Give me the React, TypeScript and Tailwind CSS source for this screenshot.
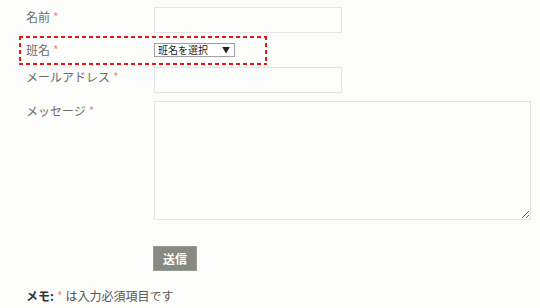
import React from "react";

const font = { fontFamily: '"Noto Sans CJK JP", "Noto Sans", sans-serif' };

function Star() {
  return <span className="ml-[3px] text-[#f28a8a]">*</span>;
}

export default function App() {
  return (
    <div
      className="w-[540px] min-h-[308px] bg-[#fcfcfa] pt-[7px] text-[12px] leading-[18px] text-[#6b6b6b]"
      style={font}
    >
      {/* 名前 */}
      <div className="flex pl-[26px]">
        <div className="w-[128px] pt-[1px]">
          名前
          <Star />
        </div>
        <input
          type="text"
          className="h-[26px] w-[188px] border border-[#e4e4e2] bg-[#fdfdfc] outline-none"
        />
      </div>

      {/* 班名 (highlighted) */}
      <div className="ml-[19px] mt-[3px] flex h-[29px] w-[248px] bg-no-repeat p-[2px] [background-image:repeating-linear-gradient(90deg,#e8141c_0_4px,transparent_4px_7px),repeating-linear-gradient(90deg,#e8141c_0_4px,transparent_4px_7px),repeating-linear-gradient(180deg,#e8141c_0_4px,transparent_4px_7px),repeating-linear-gradient(180deg,#e8141c_0_4px,transparent_4px_7px)] [background-size:100%_2px,100%_2px,2px_100%,2px_100%] [background-position:0_0,0_100%,0_0,100%_0]">
        <div className="w-[133px] pl-[5px] pt-[3px]">
          班名
          <Star />
        </div>
        <div className="mt-[5px] flex h-[14px] w-[81px] items-center justify-between border border-[#a0a0a0] bg-white pl-[3px] pr-[4px] text-[10px] leading-[12px] text-[#222]">
          <span>班名を選択</span>
          <span className="text-[8px]">▼</span>
        </div>
      </div>

      {/* メールアドレス */}
      <div className="mt-[2px] flex pl-[26px]">
        <div className="w-[128px] pt-[1px]">
          メールアドレス
          <Star />
        </div>
        <input
          type="text"
          className="h-[26px] w-[188px] border border-[#e4e4e2] bg-[#fdfdfc] outline-none"
        />
      </div>

      {/* メッセージ */}
      <div className="mt-[8px] flex pl-[26px]">
        <div className="w-[128px] pt-[1px]">
          メッセージ
          <Star />
        </div>
        <textarea className="h-[119px] w-[377px] border border-[#e4e4e2] bg-[#fdfdfc] outline-none" />
      </div>

      {/* 送信 */}
      <div className="mt-[26px] pl-[153px]">
        <button className="h-[25px] w-[44px] border border-[#9a9d95] bg-[#868a80] text-[12px] font-bold text-white">
          送信
        </button>
      </div>

      {/* メモ */}
      <div className="mt-[16px] pl-[26px] text-[#555]">
        <span className="font-bold text-[#333]">メモ:</span>
        <span className="mx-[3px] text-[#f28a8a]">*</span>
        <span>は入力必須項目です</span>
      </div>
    </div>
  );
}
